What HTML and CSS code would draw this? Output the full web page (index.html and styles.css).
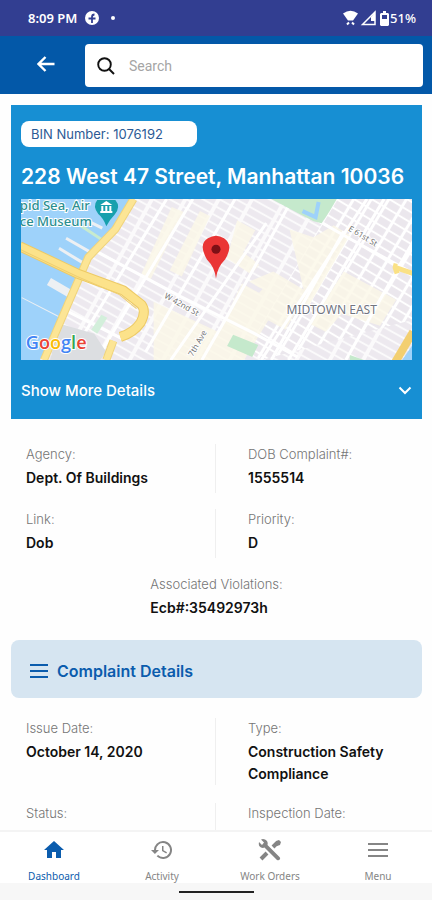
FILE: index.html
```html
<!DOCTYPE html>
<html lang="en">
<head>
    <meta charset="UTF-8">
    <meta name="viewport" content="width=device-width, initial-scale=1.0">
    <title>Complaint Details</title>
    <link rel="stylesheet" href="styles.css">
</head>
<body>
<div class="statusBar">
    <span>8:09 PM</span>
    <svg class="statusFacebook" width="14" height="14" viewBox="0 0 14 14">
        <circle cx="7" cy="7" r="7" fill="#fff"/>
        <path d="M7 12V6q0-2.500 2.500-2.500M3.500 7.500h7" fill="none" stroke="#323e91" stroke-width="1.800"/>
    </svg>
    <span class="statusDot"></span>
    <svg class="statusSignals" width="34" height="16" viewBox="0 0 34 16">
        <path d="M0 3.500Q7.500-2 15 3.500L10 10.500H5z" fill="#fff"/>
        <path d="M4 14.500l2-2M9 12.500l2 2" fill="none" stroke="#fff" stroke-width="2"/>
        <path d="M19.500 14.500L32 2v12.500z" fill="none" stroke="#fff" stroke-width="1.500"/>
        <path d="M28 7l4-5v9h-4z" fill="#fff"/>
    </svg>
    <svg class="statusBattery" width="9" height="15" viewBox="0 0 9 15">
        <path d="M3 0h3v2h2l1 1v11l-1 1H1l-1-1V3l1-1h2z" fill="#fff"/>
        <path d="M2 4h5v4H2z" fill="#323e91"/>
    </svg>
    <span class="statusPercent">51%</span>
</div>
<header class="topBar">
    <button class="backButton" aria-label="Back">
        <svg width="18" height="16" viewBox="0 0 18 16">
            <path d="M17.500 8H2M8.500 1L1.500 8l7 7" fill="none" stroke="#fff" stroke-width="2.400"/>
        </svg>
    </button>
    <form class="searchBox" onsubmit="return false;">
        <label for="searchInput" aria-label="Search">
            <svg width="18" height="18" viewBox="0 0 18 18">
                <circle cx="7.500" cy="7.500" r="6.300" fill="none" stroke="#111" stroke-width="1.900"/>
                <path d="M12 12l5 5" stroke="#111" stroke-width="2"/>
            </svg>
        </label>
        <input type="text" id="searchInput" class="searchInput" placeholder="Search" autocomplete="off">
    </form>
</header>
<main>
    <section class="propertyCard">
        <div class="binNumber">BIN Number: 1076192</div>
        <h1>228 West 47 Street, Manhattan 10036</h1>
        <svg class="map" viewBox="0 0 391 160" preserveAspectRatio="xMidYMid slice">
            <defs>
                <pattern id="blocks" width="29" height="8" patternUnits="userSpaceOnUse" patternTransform="rotate(29)">
                    <rect width="29" height="8" fill="#fbfafb"/>
                    <rect x="1" y="1" width="25" height="6" fill="#ede9ef"/>
                </pattern>
                <pattern id="eastBlocks" width="15" height="9" patternUnits="userSpaceOnUse" patternTransform="rotate(31)">
                    <rect width="15" height="9" fill="#fff"/>
                    <rect x="1" y="1" width="12" height="7" fill="#ebe7ed"/>
                </pattern>
            </defs>
            <rect width="391" height="160" fill="url(#blocks)"/>
            <path d="M315 0h76v120L240 160 225 150z" fill="url(#eastBlocks)"/>
            <!-- business areas -->
            <g fill="#fcf8e8" opacity="0.800">
                <path d="M133 102l64 30 24-48 36 20-34 56h-90z"/>
                <path d="M151 8l12 5-33 67-9-6z"/>
                <path d="M179 12l10 5-28 60-12-6z"/>
                <path d="M216 21l18 10-12 22 16 12-8 10-24-16z"/>
                <path d="M268 30l24 8 20-12 16 10-42 72-48-20-10-6 24-10 30 18z"/>
                <path d="M254 76l30 20-20 34-40-22z"/>
                <path d="M322 72l52 28-16 26-38-12-16 18-16-8z"/>
            </g>
            <!-- main avenues -->
            <g fill="none" stroke="#fff" stroke-width="3">
                <path d="M146 0L48 160M172 0L76 160M214 0L125 152M245 24L150 160M271 0L203 122l-22 38M322 32L250 160M345 0L240 160M362 0L267 160M391 42L324 160"/>
                <path d="M72 50l88 47 72 36 44 24M44 110l60 30M258 0l71 40 62 34"/>
            </g>
            <path d="M0 0h112L95 28 68 58 48 104 20 160H0z" fill="#9ed2fa"/>
            <g fill="none" stroke="#edf0f3">
                <path d="M46 39l28 16M39 49l28 17M64 20l18 9" stroke-width="3"/>
                <path d="M29 82l24 14" stroke-width="8"/>
                <path d="M2 98l39 20" stroke-width="1"/>
            </g>
            <path d="M60 26l24 16-6 8" fill="none" stroke="#c8ebce" stroke-width="3"/>
            <path d="M40 124l34 10 12 18-6 8H30z" fill="#dcdee1"/>
            <path d="M81 115l6 3-10 16-6-4z" fill="#d3efdb"/>
            <path d="M250 0h65l-7 12-8 12-8-2-14-7z" fill="#c5e9cc"/>
            <path d="M281 12l13 6 3-15" fill="none" stroke="#9ed2fa" stroke-width="4"/>
            <path d="M212 135l25 10-6 12-25-11zM328 155l14 5h-14z" fill="#c5e9cc"/>
            <!-- highways -->
            <g fill="none" stroke-linejoin="round">
                <path d="M113 0L95 30 68 58 48 104 24 160M93 141l-7 19" stroke="#f0d47c" stroke-width="8"/>
                <path d="M113 0L95 30 68 58 48 104 24 160M93 141l-7 19" stroke="#fce595" stroke-width="6"/>
                <path d="M0 47l57 27 46 17 18 14q5 7-1 18-7 10-20 14" stroke="#edca65" stroke-width="10"/>
                <path d="M0 47l57 27 46 17 18 14q5 7-1 18-7 10-20 14" stroke="#fce28a" stroke-width="8"/>
                <path d="M0 50l57 27 42 18 17 14" stroke="#efcf70" stroke-width="1"/>
                <path d="M391 132l-19 32" stroke="#f3cf70" stroke-width="8"/>
                <path d="M391 74l-18-6 2 6M371 66l4 1" stroke="#fae185" stroke-width="5"/>
            </g>
            <path d="M391 144v16h-11z" fill="#9ed2fa"/>
            <!-- labels -->
            <g class="museumLabel">
                <text x="0" y="11">pid Sea, Air</text>
                <text x="0" y="27">ce Museum</text>
            </g>
            <path d="M86 27q-3-8-8-12-6-8-1-14h18q6 7-1 15-5 5-8 11z" fill="#17a0ad"/>
            <path d="M80 6l6-4 6 4zM81 7h2v5h-2zM85 7h2v5h-2zM89 7h2v5h-2zM80 12h12v2H80z" fill="#fff"/>
            <g class="streetLabel">
                <text transform="translate(143 98) rotate(29)">W 42nd St</text>
                <text transform="translate(172 157) rotate(-60)">7th Ave</text>
                <text transform="translate(326 31) rotate(31)">E 61st St</text>
            </g>
            <text class="areaLabel" x="265" y="114">MIDTOWN EAST</text>
            <path d="M195 79q-1-11-9-19-9-15 1-21 8-5 16 0 10 7 1 21-8 8-9 19z" fill="#ea3535"/>
            <circle cx="195" cy="50" r="4.500" fill="#7d1016"/>
            <text class="googleLabel" x="6" y="149"><tspan fill="#4285f4">G</tspan><tspan fill="#ea4335">o</tspan><tspan fill="#fbbc05">o</tspan><tspan fill="#4285f4">g</tspan><tspan fill="#34a853">l</tspan><tspan fill="#ea4335">e</tspan></text>
        </svg>
        <button class="showMore">
            Show More Details
            <svg width="14" height="9" viewBox="0 0 14 9">
                <path d="M1.500 1.500L7 7l5.500-5.500" fill="none" stroke="#fff" stroke-width="2"/>
            </svg>
        </button>
    </section>
    <dl class="details">
        <div class="detail">
            <dt>Agency:</dt>
            <dd>Dept. Of Buildings</dd>
        </div>
        <div class="detail">
            <dt>DOB Complaint#:</dt>
            <dd>1555514</dd>
        </div>
        <div class="detail">
            <dt>Link:</dt>
            <dd>Dob</dd>
        </div>
        <div class="detail">
            <dt>Priority:</dt>
            <dd>D</dd>
        </div>
        <div class="detail detailCenter">
            <dt>Associated Violations:</dt>
            <dd>Ecb#:35492973h</dd>
        </div>
    </dl>
    <h2>
        <svg width="18" height="14" viewBox="0 0 18 14">
            <path d="M0 1h18M0 7h18M0 13h18" stroke="#0b5cad" stroke-width="2"/>
        </svg>
        Complaint Details
    </h2>
    <dl class="details complaintDetails">
        <div class="detail">
            <dt>Issue Date:</dt>
            <dd>October 14, 2020</dd>
        </div>
        <div class="detail">
            <dt>Type:</dt>
            <dd>Construction Safety Compliance</dd>
        </div>
        <div class="detail">
            <dt>Status:</dt>
            <dd></dd>
        </div>
        <div class="detail">
            <dt>Inspection Date:</dt>
            <dd></dd>
        </div>
    </dl>
</main>
<nav class="bottomNav">
    <a href="#" class="active">
        <svg width="24" height="24" viewBox="0 0 24 24">
            <path d="M10 20v-6h4v6h5v-8h3L12 3 2 12h3v8z" fill="currentColor"/>
        </svg>
        Dashboard
    </a>
    <a href="#">
        <svg width="24" height="24" viewBox="0 0 24 24">
            <path d="M13 3a9 9 0 0 0-9 9H1l3.900 3.900L9 12H6a7 7 0 1 1 2.060 4.940l-1.420 1.420A9 9 0 1 0 13 3zm-1 5v5l4.280 2.540.72-1.210-3.500-2.080V8z" fill="currentColor"/>
        </svg>
        Activity
    </a>
    <a href="#">
        <svg width="24" height="24" viewBox="0 0 24 24">
            <path d="M3 21l6-6M15 9l4-4" fill="none" stroke="currentColor" stroke-width="4"/>
            <path d="M18 3l3-1 2 2-1 3-3 1-2-2zM3 1.500l3 3L4 7 1 4q-1 4 2 5.500 2 .800 3.500 0L19 22q2 1 3-1 .500-1-.500-2L9.500 7Q10.500 3 7 1.500 5 .700 3 1.500z" fill="currentColor"/>
        </svg>
        Work Orders
    </a>
    <a href="#">
        <svg width="24" height="24" viewBox="0 0 24 24">
            <path d="M2 6h20M2 12h20M2 18h20" stroke="currentColor" stroke-width="2"/>
        </svg>
        Menu
    </a>
</nav>
<div class="systemBar"><span class="homeIndicator"></span></div>
</body>
</html>
```
FILE: styles.css
```css
*{
    box-sizing: border-box;
}
body{
    display: flex;
    flex-direction: column;
    height: 100vh;
    margin: 0;
    overflow: hidden;
    background-color: #fefefe;
    font-family: Inter, "Liberation Sans", sans-serif;
}
button{
    border: 0;
    padding: 0;
    background: none;
    font-family: inherit;
    cursor: pointer;
}
svg{
    flex: none;
}

/* status bar */
.statusBar{
    display: flex;
    flex: none;
    align-items: center;
    height: 36px;
    padding: 0 16px 0 28px;
    background-color: #323e91;
    color: #fff;
    font-family: "Noto Sans", sans-serif;
    font-size: 13px;
    font-weight: 600;
}
.statusFacebook{
    margin-left: 8px;
}
.statusDot{
    width: 4px;
    height: 4px;
    margin-left: 12px;
    border-radius: 50%;
    background-color: #fff;
}
.statusSignals{
    margin-left: auto;
}
.statusBattery{
    margin-left: 3px;
}
.statusPercent{
    margin-left: 1px;
    font-weight: 500;
}

/* header */
.topBar{
    display: flex;
    flex: none;
    align-items: center;
    height: 58px;
    padding: 0 9px 0 0;
    background-color: #0358a8;
}
.backButton{
    width: 85px;
    height: 44px;
    padding-left: 7px;
}
.searchBox{
    display: flex;
    flex: 1;
    align-items: center;
    height: 43px;
    padding: 2px 12px 0;
    border-radius: 4px;
    background-color: #fff;
}
.searchBox label{
    display: flex;
}
.searchInput{
    flex: 1;
    min-width: 0;
    margin-left: 12px;
    border: 0;
    outline: 0;
    font-family: Roboto, sans-serif;
    font-size: 14px;
}
.searchInput::placeholder{
    color: #a5a5a5;
}

/* content */
main{
    flex: 1;
    min-height: 0;
    padding: 11px 10px 0 11px;
    overflow: hidden;
}
.propertyCard{
    padding: 16px 10px 0;
    background-color: #178fd3;
    color: #fff;
}
.binNumber{
    width: 176px;
    padding: 0 10px;
    border-radius: 8px;
    background-color: #fff;
    color: #2c5a94;
    font-size: 13px;
    line-height: 26px;
}
h1{
    margin: 14px 0 6px;
    font-size: 21px;
    font-weight: 600;
    line-height: 32px;
    white-space: nowrap;
}
.map{
    display: block;
    width: 100%;
    height: 161px;
}
.museumLabel{
    fill: #2b8f91;
    stroke: #fff;
    stroke-width: 2px;
    paint-order: stroke;
    font: 500 13px "Noto Sans", sans-serif;
}
.streetLabel{
    fill: #757575;
    stroke: #fff;
    stroke-width: 2px;
    paint-order: stroke;
    font: 8px "Noto Sans", sans-serif;
}
.areaLabel{
    fill: #72757f;
    stroke: #fff;
    stroke-width: 2px;
    paint-order: stroke;
    font: 12px "Noto Sans", sans-serif;
}
.googleLabel{
    stroke: #fff;
    stroke-width: 2px;
    paint-order: stroke;
    font: 600 18px "Open Sans", sans-serif;
}
.showMore{
    display: flex;
    align-items: center;
    justify-content: space-between;
    width: 100%;
    height: 59px;
    padding-top: 2px;
    color: #fff;
    font-size: 15px;
    font-weight: 500;
}
.details{
    display: grid;
    grid-template-columns: 205px 1fr;
    row-gap: 16px;
    margin: 25px 0 17px;
}
.complaintDetails{
    row-gap: 18px;
    margin-top: 20px;
}
.detail{
    min-height: 49px;
    padding: 0 15px;
}
.detail:nth-child(odd):not(.detailCenter){
    border-right: 1px solid #efefef;
}
.detail:nth-child(even){
    padding-left: 32px;
}
.detailCenter{
    grid-column: 1 / 3;
    justify-self: center;
}
dt{
    color: #757575;
    font-size: 13px;
    font-weight: 300;
    line-height: 20px;
}
dd{
    margin: 3px 0 0;
    color: #111;
    font-size: 14px;
    font-weight: 600;
    line-height: 22px;
}
h2{
    display: flex;
    align-items: center;
    gap: 9px;
    height: 58px;
    margin: 0;
    padding: 4px 19px 0;
    border-radius: 8px;
    background-color: #d6e5f1;
    color: #0b5cad;
    font-size: 16px;
    font-weight: 600;
}

/* bottom navigation */
.bottomNav{
    display: flex;
    flex: none;
    height: 53px;
    border-top: 2px solid #f4f4f4;
    background-color: #fff;
}
.bottomNav a{
    display: flex;
    flex: 1;
    flex-direction: column;
    align-items: center;
    gap: 7px;
    padding-top: 6px;
    color: #858585;
    font-family: "Noto Sans", sans-serif;
    font-size: 10px;
    line-height: 14px;
    text-decoration: none;
}
.bottomNav .active{
    color: #0b5cad;
}
.systemBar{
    display: flex;
    flex: none;
    justify-content: center;
    height: 17px;
    padding-top: 8px;
    background-color: #f7f7f7;
}
.homeIndicator{
    width: 75px;
    height: 2px;
    background-color: #222;
}
```
